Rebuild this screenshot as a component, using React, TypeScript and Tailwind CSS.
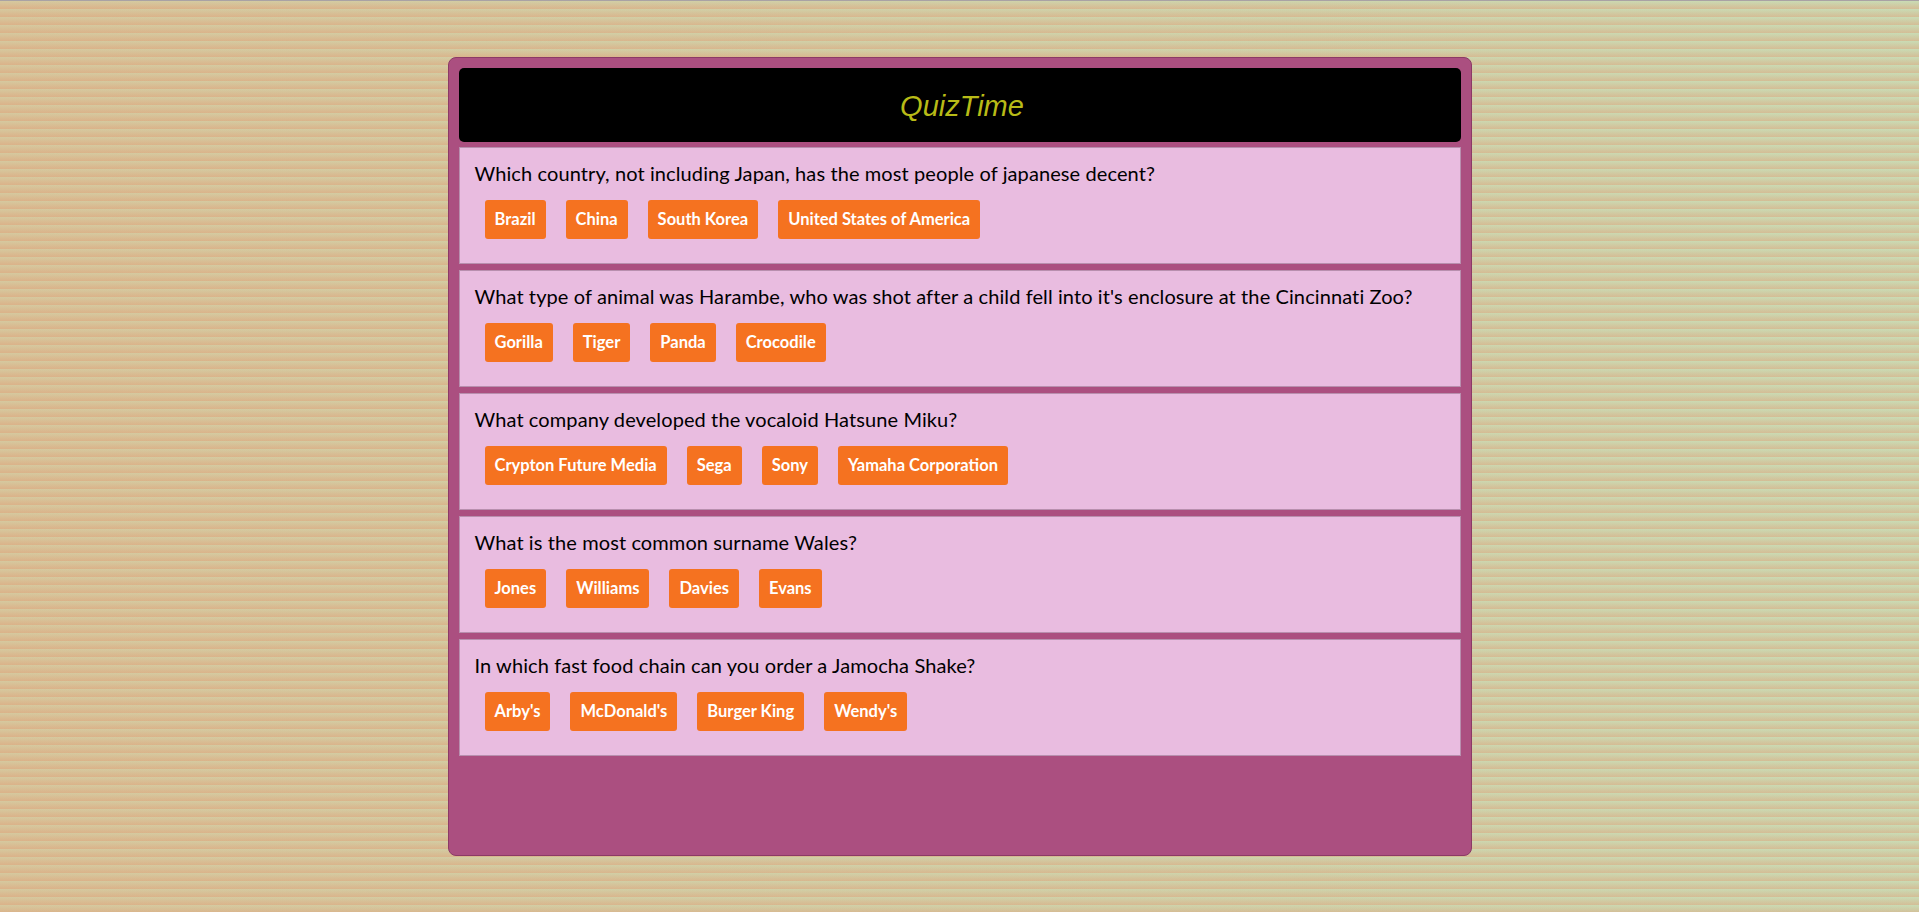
import React from "react";

type Question = {
  text: string;
  answers: string[];
};

const questions: Question[] = [
  {
    text: "Which country, not including Japan, has the most people of japanese decent?",
    answers: ["Brazil", "China", "South Korea", "United States of America"],
  },
  {
    text: "What type of animal was Harambe, who was shot after a child fell into it's enclosure at the Cincinnati Zoo?",
    answers: ["Gorilla", "Tiger", "Panda", "Crocodile"],
  },
  {
    text: "What company developed the vocaloid Hatsune Miku?",
    answers: ["Crypton Future Media", "Sega", "Sony", "Yamaha Corporation"],
  },
  {
    text: "What is the most common surname Wales?",
    answers: ["Jones", "Williams", "Davies", "Evans"],
  },
  {
    text: "In which fast food chain can you order a Jamocha Shake?",
    answers: ["Arby's", "McDonald's", "Burger King", "Wendy's"],
  },
];

const QuestionCard: React.FC<{ question: Question }> = ({ question }) => {
  return (
    <div className="border border-[#b88fae] bg-[#e9bce0] px-[15px] pt-[13px] pb-[24px]">
      <p className="text-[20px] leading-[24px] tracking-[0.1px] text-black">{question.text}</p>
      <div className="mt-[15px] flex gap-[20px] pl-[10px]">
        {question.answers.map((answer) => (
          <button
            key={answer}
            className="h-[39px] rounded-[3px] bg-[#f57220] px-[10px] text-[16.5px] font-bold text-white"
          >
            {answer}
          </button>
        ))}
      </div>
    </div>
  );
};

export default function App() {
  return (
    <div className="min-h-[912px] w-full border-t border-[#a9a2a4] bg-[image:repeating-linear-gradient(to_bottom,rgba(230,140,100,0)_0px,rgba(230,140,100,0.38)_8px),linear-gradient(to_right,#d5c99f,#c9dcb5)] pt-[56px] font-['Lato',sans-serif]">
      <div className="mx-auto box-border flex h-[799px] w-[1024px] flex-col gap-[6px] rounded-[8px] border border-[#8b3a66] bg-[#ab4f80] p-[10px]">
        <header className="mb-[-1px] flex h-[74px] items-center justify-center rounded-[5px] bg-black pt-[3px] pl-[5px]">
          <h1 className="font-['Liberation_Sans',Arial,sans-serif] text-[29px] italic text-[#b8bb17]">
            QuizTime
          </h1>
        </header>
        {questions.map((q) => (
          <QuestionCard key={q.text} question={q} />
        ))}
      </div>
    </div>
  );
}
